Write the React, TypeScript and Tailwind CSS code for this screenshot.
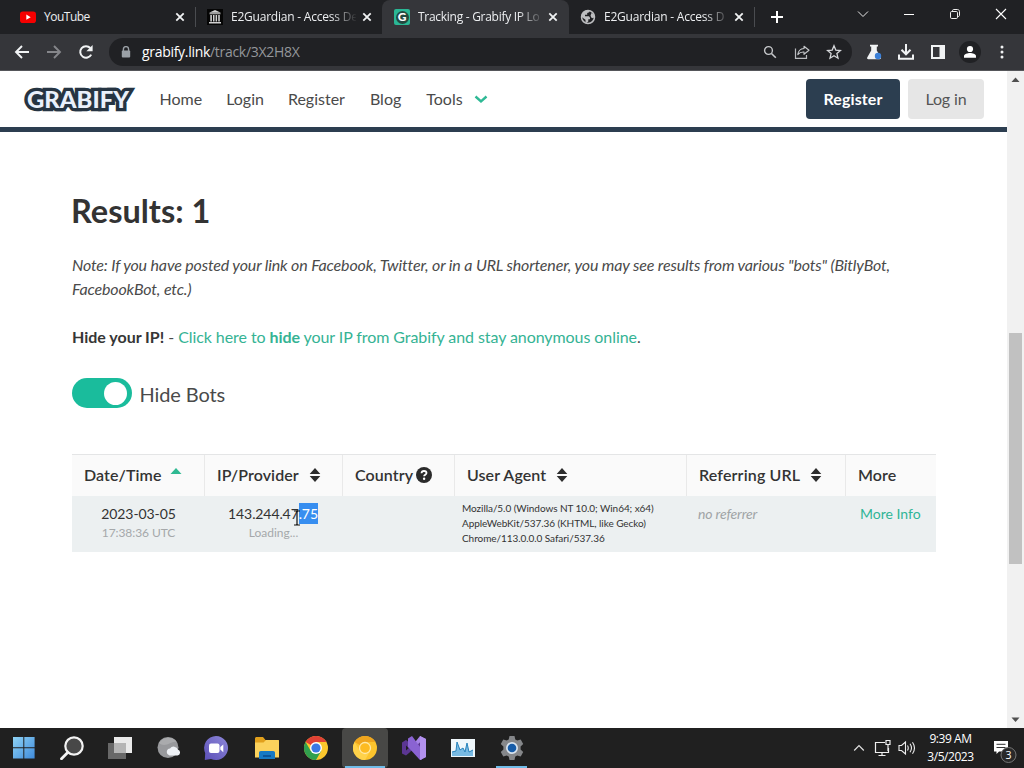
import React from 'react';

type Kids = { children?: React.ReactNode; className?: string };

const ui = "font-['Open_Sans','Noto_Sans',sans-serif]";

function Icon({ size = 16, className = '', children }: Kids & { size?: number }) {
  return (
    <svg width={size} height={size} viewBox={`0 0 ${size} ${size}`} className={`block shrink-0 ${className}`} fill="none">
      {children}
    </svg>
  );
}

function TabClose() {
  return (
    <Icon size={16}>
      <path d="M4.3 4.3l7.4 7.4M11.7 4.3l-7.4 7.4" stroke="#f1f3f4" strokeWidth="1.8" />
    </Icon>
  );
}

function Tab({ icon, title, fade, className, titleClass }: { icon: React.ReactNode; title: string; fade?: boolean; className: string; titleClass: string }) {
  return (
    <div className={`flex h-[34px] shrink-0 items-center ${className}`}>
      {icon}
      <div
        className={`ml-2 h-[18px] w-[125px] text-xs leading-[18px] whitespace-nowrap text-[#eceef0] ${titleClass} ${
          fade ? '[mask-image:linear-gradient(to_right,black_80%,transparent_101%)]' : ''
        }`}
      >
        {title}
      </div>
      <TabClose />
    </div>
  );
}

function TabStrip() {
  return (
    <div className="flex h-[34px] items-center bg-[#202124]">
      <Tab
        className="w-[195px] pl-5"
        title="YouTube"
        titleClass="mr-[3px] tracking-[-0.5px]"
        icon={
          <Icon size={16}>
            <rect x="0" y="2.5" width="16" height="11.5" rx="2.8" fill="#f50000" />
            <path d="M6.3 5.6v5.2l4.4-2.6z" fill="#fff" />
          </Icon>
        }
      />
      <div className="h-5 w-px bg-[#4a4c50]" />
      <Tab
        className="w-[186px] pl-[11px]"
        title="E2Guardian - Access De"
        fade
        titleClass="mr-[3px] tracking-[-0.22px]"
        icon={
          <Icon size={16}>
            <path d="M0 0h16v16H0z" fill="#050505" />
            <path d="M8 1l6 2.7H2zM2.5 4.3h11v1h-11zM3.3 6h1.6v6.5H3.3zM6 6h1.5v6.5H6zM8.6 6h1.5v6.5H8.6zM11.2 6h1.6v6.5h-1.6zM2 13h12v1.6H2z" fill="#d0d0d0" />
          </Icon>
        }
      />
      <Tab
        className="w-[187px] rounded-t-lg bg-[#35363a] pl-3"
        title="Tracking - Grabify IP Lo"
        fade
        titleClass="mr-[2px] tracking-[-0.28px]"
        icon={
          <span className="flex h-4 w-4 items-center justify-center rounded-[2px] bg-[#2ab795]">
            <span className="flex h-[13px] w-[13px] items-center justify-center rounded-full bg-[#24483f] font-['Lato',sans-serif] text-[12px] leading-none font-black text-white">G</span>
          </span>
        }
      />
      <Tab
        className="w-[185px] pl-[11px]"
        title="E2Guardian - Access D"
        fade
        titleClass="mr-[2px] tracking-[-0.22px]"
        icon={
          <Icon size={16}>
            <circle cx="8" cy="8" r="6.500" stroke="#bdbec0" strokeWidth="1.500" />
            <path d="M1.500 6.500C2.300 3.500 5 1.300 8 1.300l1.500.4-.3 1.500-2 .8v1.800H5v1.500h4l1 1.500v1.400H8.300v2.200L6.500 14 5.500 13v-2.200L1.600 8zM11.500 4l2 1 1 3-1.500 1.200-1.800-.7-.7-2z" fill="#bdbec0" />
          </Icon>
        }
      />
      <div className="h-5 w-px bg-[#4a4c50]" />
      <Icon size={14} className="ml-[15px]">
        <path d="M7 1v12M1 7h12" stroke="#fff" strokeWidth="2" />
      </Icon>
      <div className="ml-auto flex h-7 items-center self-start">
        <span className="flex w-[46px] justify-center">
          <Icon size={14}><path d="M2 4.5l5 5 5-5" stroke="#e8e8e8" /></Icon>
        </span>
        <span className="flex w-[46px] justify-center">
          <Icon size={14}><path d="M2 7.5h10" stroke="#fff" /></Icon>
        </span>
        <span className="flex w-[46px] justify-center">
          <Icon size={14}>
            <rect x="2.5" y="4.5" width="7" height="7" rx="1.2" stroke="#eee" />
            <path d="M4.5 4.3V3.7c0-.7.5-1.2 1.2-1.2h3.8c1.1 0 2 .9 2 2v3.8c0 .7-.5 1.2-1.2 1.2h-.5" stroke="#eee" />
          </Icon>
        </span>
        <span className="flex w-[46px] justify-center">
          <Icon size={14}><path d="M2 2l10 10M12 2L2 12" stroke="#fff" strokeWidth="1.1" /></Icon>
        </span>
      </div>
    </div>
  );
}

function Cell({ children }: Kids) {
  return <span className="flex w-8 shrink-0 items-center justify-center">{children}</span>;
}

function Toolbar() {
  return (
    <div className="flex h-[37px] items-center border-b border-[#55565a] bg-[#35363a] pl-[6px]">
      <Cell><Icon size={16}><path d="M15 8H2M8 2L2 8l6 6" stroke="#f1f3f4" strokeWidth="1.9" /></Icon></Cell>
      <Cell><Icon size={16}><path d="M1 8h13M8 2l6 6-6 6" stroke="#85868a" strokeWidth="1.9" /></Icon></Cell>
      <Cell>
        <Icon size={16}>
          <path d="M13.2 10.6A5.8 5.8 0 1 1 12.3 4" stroke="#f1f3f4" strokeWidth="2" />
          <path d="M14.6 1v6.2H8.4z" fill="#f1f3f4" />
        </Icon>
      </Cell>
      <div className="ml-[7px] flex h-7 w-[743px] items-center rounded-full bg-[#202124] pl-[11px]">
        <Icon size={12}>
          <path d="M3.4 5V3.2a2.6 2.6 0 0 1 5.2 0V5" stroke="#9aa0a6" strokeWidth="1.4" />
          <rect x="1.8" y="4.6" width="8.4" height="6.9" rx="1" fill="#9aa0a6" />
        </Icon>
        <span className="ml-[10px] text-sm leading-5 tracking-[-0.3px] text-white">
          grabify.link<span className="text-[#94979b]">/track/3X2H8X</span>
        </span>
        <div className="mr-[2px] ml-auto flex">
          <Cell>
            <Icon size={16}><circle cx="6.5" cy="6.5" r="3.9" stroke="#c6c8cb" strokeWidth="1.4" /><path d="M9.5 9.5l4.3 4.3" stroke="#c6c8cb" strokeWidth="1.6" /></Icon>
          </Cell>
          <Cell>
            <Icon size={16}>
              <path d="M1.5 4.5v9.9h11V11" stroke="#b9bbbe" strokeWidth="1.2" />
              <path d="M10 2.2l5 4.1-5 4V8c-2.700-.2-4.500.5-6.200 2.600C4.200 7 6.300 4.800 10 4.500z" stroke="#c6c8cb" strokeWidth="1.100" strokeLinejoin="round" />
            </Icon>
          </Cell>
          <Cell>
            <Icon size={16}><path d="M8 1.800l1.800 4.300 4.700.4-3.600 3.100 1.100 4.600-4-2.500-4 2.500 1.100-4.600L1.500 6.500l4.700-.4z" stroke="#d5d7da" strokeWidth="1.300" /></Icon>
          </Cell>
        </div>
      </div>
      <span className="ml-[6px] flex">
        <Cell>
          <Icon size={16}>
            <path d="M4 .8h8v1.600h-1.200v4l4 7.100c.4.900-.2 1.700-1.100 1.700H2.300c-.9 0-1.500-.8-1.100-1.700l4-7.100v-4H4z" fill="#f1f3f4" />
            <circle cx="12" cy="12" r="3.200" fill="#3b80d8" />
          </Icon>
        </Cell>
      </span>
      <Cell><Icon size={18}><path d="M9 1v10M4.500 6.800L9 11.300l4.500-4.500M2 11.500v4.300h14v-4.300" stroke="#f1f3f4" strokeWidth="2" /></Icon></Cell>
      <Cell><Icon size={16}><path d="M1 1h14v14H1zM3 3v10h6.500V3z" fill="#f1f3f4" fillRule="evenodd" /></Icon></Cell>
      <Cell>
        <Icon size={22}>
          <circle cx="11" cy="11" r="11" fill="#202124" />
          <circle cx="11" cy="8" r="3.100" fill="#fff" />
          <path d="M5 16.800v-1.600c0-2.400 3.600-3.200 6-3.200s6 .8 6 3.200v1.600z" fill="#fff" />
        </Icon>
      </Cell>
      <Cell><Icon size={16}><circle cx="8" cy="3" r="1.500" fill="#f1f3f4" /><circle cx="8" cy="8" r="1.500" fill="#f1f3f4" /><circle cx="8" cy="13" r="1.500" fill="#f1f3f4" /></Icon></Cell>
    </div>
  );
}

function SiteHeader() {
  return (
    <div className="flex h-[61px] items-center border-b-[5px] border-[#2c3e50] bg-white pl-[23px] text-base text-[#4a4a4a]">
      <svg width="113" height="30" viewBox="0 0 113 30" className="block shrink-0">
        <text x="4" y="23.500" textLength="102" lengthAdjust="spacingAndGlyphs" className="font-['Lato',sans-serif] text-[22px] font-black" fill="#e9f0fb" stroke="#263442" strokeWidth="6.500" strokeLinejoin="miter" paintOrder="stroke">
          GRABIFY
        </text>
      </svg>
      <nav className="ml-[23.500px] flex items-center gap-6">
        <span>Home</span>
        <span>Login</span>
        <span>Register</span>
        <span className="ml-[1px]">Blog</span>
        <span className="ml-[1px] flex items-center">
          Tools
          <Icon size={14} className="ml-[11px]"><path d="M1.500 4.500l5.500 5 5.500-5" stroke="#2fb995" strokeWidth="2.400" /></Icon>
        </span>
      </nav>
      <div className="mr-[23px] ml-auto flex gap-2">
        <span className="flex h-10 w-[94px] items-center justify-center rounded bg-[#2c3e50] font-bold tracking-[0.1px] text-white">Register</span>
        <span className="flex h-10 w-[76px] items-center justify-center rounded bg-[#e6e6e6] tracking-[-0.1px] text-[#555]">Log in</span>
      </div>
    </div>
  );
}

function Sort() {
  return (
    <Icon size={14} className="ml-[9px]">
      <path d="M7 0l5.300 6H1.700zM7 14l5.300-6H1.700z" fill="#2d2d2d" />
    </Icon>
  );
}

function Th({ className = '', children }: Kids) {
  return <div className={`flex h-[41px] shrink-0 items-center border-r border-[#e9e9e9] pb-px pl-3 ${className}`}>{children}</div>;
}

function ResultsTable() {
  return (
    <div className="mt-[46px] w-[864px]">
      <div className="flex border-t border-[#e4e5e6] bg-[#fafafa] text-base font-semibold tracking-[0.080px] text-[#333]">
        <Th className="w-[133px]">
          Date/Time
          <Icon size={12} className="mb-[7px] ml-[9px]"><path d="M6 2l5.500 6H.5z" fill="#2fb992" /></Icon>
        </Th>
        <Th className="w-[138px]">IP/Provider<Sort /></Th>
        <Th className="w-[112px]">
          Country
          <Icon size={16} className="ml-[3px]">
            <circle cx="8" cy="8" r="8" fill="#2b2b2b" />
            <path d="M5.500 6.300C5.600 4.800 6.600 4 8 4s2.500.8 2.500 2c0 1.700-2.400 1.800-2.400 3.300" stroke="#fff" strokeWidth="1.800" />
            <circle cx="8.100" cy="11.700" r="1.200" fill="#fff" />
          </Icon>
        </Th>
        <Th className="w-[232px]">User Agent<Sort /></Th>
        <Th className="w-[159px] tracking-[0.150px]">Referring URL<Sort /></Th>
        <div className="flex h-[41px] items-center pb-px pl-3">More</div>
      </div>
      <div className="flex h-[56px] bg-[#ecf0f1]">
        <div className="w-[133px] pt-[7px] text-center">
          <div className="text-[14px] leading-[22px] tracking-[-0.100px] text-[#333]">2023-03-05</div>
          <div className="text-[12px] leading-[15px] tracking-[-0.080px] text-[#a5a8aa]">17:38:36 UTC</div>
        </div>
        <div className="relative w-[138px] pt-[7px] text-center">
          <div className="pr-[2px] text-[14px] leading-[22px] tracking-[-0.100px] text-[#333]">
            143.244.47<span className="inline-block h-[21px] bg-[#378ef0] align-top leading-[22px] text-white">.75</span>
          </div>
          <div className="pr-px text-[12px] leading-[15px] text-[#a5a8aa]">Loading...</div>
          <Icon size={16} className="absolute top-[14px] left-[84px]"><path d="M5 1h2.500L8 2l.5-1H11M8 2v12M5 15h2.500L8 14l.5 1H11" stroke="#111" strokeWidth="1.200" /></Icon>
        </div>
        <div className="w-[119px]" />
        <div className="w-[236px] pt-[5px] text-[10px] leading-[15px] tracking-[-0.060px] text-[#333]">
          Mozilla/5.0 (Windows NT 10.0; Win64; x64)
          <br />
          AppleWebKit/537.36 (KHTML, like Gecko)
          <br />
          Chrome/113.0.0.0 Safari/537.36
        </div>
        <div className="w-[162px] pt-[7px] text-[14px] leading-[22px] tracking-[-0.150px] text-[#a0a4a6] italic">no referrer</div>
        <div className="pt-[7px] text-[14px] leading-[22px] text-[#30b596]">More Info</div>
      </div>
    </div>
  );
}

function Page() {
  return (
    <div className="w-[1007px] bg-white font-['Lato',sans-serif] text-[#4a4a4a]">
      <SiteHeader />
      <main className="pt-[58px] pl-[72px]">
        <h1 className="-ml-px text-[32.500px] leading-[42px] font-bold text-[#333]">Results: 1</h1>
        <p className="mt-[21px] w-[864px] text-base leading-6 tracking-[-0.152px] whitespace-nowrap italic">
          Note: If you have posted your link on Facebook, Twitter, or in a URL shortener, you may see results from various "bots" (BitlyBot,
          <br />
          FacebookBot, etc.)
        </p>
        <p className="mt-6 text-base leading-6 tracking-[-0.075px]">
          <span className="font-bold tracking-[-0.020px] text-[#363636]">Hide your IP!</span> -{' '}
          <span className="text-[#35b394]">
            Click here to <span className="font-bold">hide</span> your IP from Grabify and stay anonymous online
          </span>
          .
        </p>
        <div className="mt-[29px] flex h-[30px] items-center">
          <div className="flex h-[30px] w-[60px] items-center justify-end rounded-full bg-[#1abc9c] pr-[5px]">
            <div className="h-[23px] w-[23px] rounded-full bg-white" />
          </div>
          <span className="mt-px ml-[7.500px] text-[20px] leading-6 tracking-[-0.100px]">Hide Bots</span>
        </div>
        <ResultsTable />
      </main>
    </div>
  );
}

function Scrollbar() {
  return (
    <div className="flex w-[17px] flex-col items-center bg-[#f1f1f1]">
      <Icon size={17}><path d="M8.500 6.500l4 4.500h-8z" fill="#505050" /></Icon>
      <div className="mt-[245px] h-[231px] w-[13px] bg-[#c1c1c1]" />
      <Icon size={17} className="mt-auto"><path d="M8.500 11l4-4.500h-8z" fill="#505050" /></Icon>
    </div>
  );
}

function Slot({ wide, className = '', children }: Kids & { wide?: boolean }) {
  return <span className={`flex h-10 shrink-0 items-center justify-center ${wide ? 'w-[49.200px]' : 'w-12'} ${className}`}>{children}</span>;
}

function Taskbar() {
  return (
    <div className="flex h-10 items-center bg-[#202020]">
      <Slot>
        <Icon size={24}>
          <defs><linearGradient id="win" x1="0" y1="0" x2="1" y2="1"><stop stopColor="#8ed2f4" /><stop offset="1" stopColor="#3f8bdc" /></linearGradient></defs>
          <path d="M1 1h10.300v10.300H1zM12.300 1h10.300v10.300H12.300zM1 12.300h10.300v10.300H1zM12.300 12.300h10.300v10.300H12.300z" fill="url(#win)" />
        </Icon>
      </Slot>
      <Slot>
        <Icon size={24}><circle cx="14" cy="10" r="8.700" fill="#484848" stroke="#f2f2f2" strokeWidth="2.200" /><path d="M7.700 16.500L1.500 22.700" stroke="#f2f2f2" strokeWidth="2.800" strokeLinecap="round" /></Icon>
      </Slot>
      <Slot>
        <Icon size={24}><path d="M6 1h18v16H6z" fill="#eaeaea" /><path d="M0 7h18v16H0z" fill="#686868" /><path d="M6 7h12v10H6z" fill="#b5b5b5" /></Icon>
      </Slot>
      <Slot>
        <Icon size={24}><circle cx="12" cy="11.500" r="10.500" fill="#98999c" /><path d="M3 7a10.500 10.500 0 0 1 18-.5C17 3 10 13 3 7z" fill="#aaabad" /><path d="M13.500 19.500a3.500 3.500 0 0 1 .5-6.900 4.500 4.500 0 0 1 8 1.100 3 3 0 0 1-.5 5.800z" fill="#eef1f5" /></Icon>
      </Slot>
      <Slot>
        <Icon size={24}>
          <defs><linearGradient id="chat" x1="1" y1="0" x2="0" y2="1"><stop stopColor="#8d87d8" /><stop offset="1" stopColor="#5c50b8" /></linearGradient></defs>
          <path d="M12 0a12 12 0 1 1-5 22.900L.8 24 1.200 17A12 12 0 0 1 12 0z" fill="url(#chat)" />
          <rect x="5" y="7.500" width="10.500" height="9.500" rx="2" fill="#fff" /><path d="M16.300 11l3-2.600v7.800l-3-2.600z" fill="#fff" />
        </Icon>
      </Slot>
      <span className="ml-[2px] flex">
        <Slot wide>
          <Icon size={24}>
            <path d="M0 2.500C0 1.700.7 1 1.500 1H8l2.500 3H23c.6 0 1 .5 1 1v4H0z" fill="#e1a01c" /><path d="M0 6.500h8.500L11 4h12c.6 0 1 .5 1 1v16.500H0z" fill="#fbd25c" />
            <path d="M4 23v-6.200c0-1 .8-1.800 1.800-1.800h12.400c1 0 1.800.8 1.800 1.800V23z" fill="#1679c4" /><path d="M8 19h8v2H8z" fill="#0b559b" />
          </Icon>
        </Slot>
        <Slot wide>
          <Icon size={24}>
            <circle cx="12" cy="12" r="12" fill="#fcc72d" />
            <path d="M12 12L1.600 6A12 12 0 0 1 22.400 6H12z" fill="#e14135" /><path d="M1.600 6A12 12 0 0 0 12 24l5.200-9L12 12l-5.200 3z" fill="#31a04e" />
            <circle cx="12" cy="12" r="6" fill="#fff" /><circle cx="12" cy="12" r="4.600" fill="#3b79e4" />
          </Icon>
        </Slot>
        <Slot wide>
          <span className="flex h-10 w-[46px] flex-col items-center justify-between rounded bg-[#484846] pt-2">
            <Icon size={24}>
              <circle cx="12" cy="12" r="12" fill="#fcc42d" />
              <path d="M12 12L1.600 6A12 12 0 0 1 22.400 6H12z" fill="#efa51e" /><path d="M1.600 6A12 12 0 0 0 12 24l5.200-9L12 12l-5.200 3z" fill="#ffd24a" />
              <circle cx="12" cy="12" r="5.500" fill="#fdbb22" stroke="#ffe9a8" strokeWidth="1.300" />
            </Icon>
            <span className="h-[2px] w-10 bg-[#70bce8]" />
          </span>
        </Slot>
        <Slot wide>
          <Icon size={24}>
            <path d="M0 6.500L4 4l14 11V6.500L7 17l-3 2.500-4-2z" fill="#5b3692" />
            <path d="M4 9.500v5l2.800-2.500z" fill="#202020" />
            <path d="M12 7.500L18 0l6 3v18l-6 3V6.500l-5 4.700z" fill="#a783e6" />
            <path d="M6 2.500L10 0l10 13.500V23.500l-2 .5L6 11z" fill="#8a63d2" />
            <path d="M18 0l6 3v18l-6 3z" fill="#b392ef" />
          </Icon>
        </Slot>
        <Slot wide>
          <Icon size={24}>
            <path d="M0 3h24v18H0z" fill="#eff7fb" /><path d="M1 20v-4l4-1 1-9 3 8 3-2 2 4 2-9 2 9 4-2v6z" fill="#78bae3" /><path d="M1 16l4-1 1-9 3 8 3-2 2 4 2-9 2 9 4-2" stroke="#2683bc" />
          </Icon>
        </Slot>
        <Slot wide className="-ml-px">
          <span className="flex h-10 flex-col items-center justify-between pt-2">
            <Icon size={24}>
              <path d="M9.500 0h5l.8 3.500 2 1.100 3.400-1 2.500 4.300-2.600 2.500v3.200l2.600 2.500-2.500 4.300-3.400-1-2 1.100-.8 3.500h-5l-.8-3.500-2-1.100-3.400 1L.8 16.100l2.600-2.500v-3.200L.8 7.900l2.500-4.300 3.400 1 2-1.100z" fill="#85878a" />
              <circle cx="12" cy="12" r="6" fill="#d9e4ef" /><circle cx="12" cy="12" r="4.300" fill="#165ca8" />
            </Icon>
            <span className="h-[2px] w-[31px] bg-[#70bce8]" />
          </span>
        </Slot>
      </span>
      <div className="ml-auto flex h-10 items-center text-white">
        <Icon size={12}><path d="M1.200 8.500L6 3.700l4.800 4.800" stroke="#e2e2e2" strokeWidth="1.200" /></Icon>
        <Icon size={18} className="ml-[9px]">
          <path d="M11 3.500H1.500v10h13V9M8 13.500v3M4.500 16.500h7" stroke="#eee" strokeWidth="1.200" /><path d="M12 1.500h4v4h-4zM14 5.500V12" stroke="#eee" strokeWidth="1.200" />
        </Icon>
        <Icon size={18} className="ml-[6px]">
          <path d="M1 6.500h2.500L7.500 3v12l-4-3.500H1zM9.500 6.500q1.500 2.500 0 5M12 4.800q3 4.200 0 8.400M14.500 3.200q4 5.800 0 11.600" stroke="#eee" strokeWidth="1.100" />
        </Icon>
        <div className="ml-[7px] w-[55px] text-center text-xs leading-[18px] tracking-[-0.450px] whitespace-nowrap">
          <div>9:39 AM</div>
          <div>3/5/2023</div>
        </div>
        <svg width="24" height="30" viewBox="0 0 24 30" className="mr-[7px] ml-[15px] block" fill="none">
          <path d="M1 8h14v10.500H6L3.500 21v-2.500H1z" fill="#fff" /><path d="M3.500 11.300h9M3.500 14.500h9" stroke="#333" />
          <circle cx="15.500" cy="22" r="7.500" fill="#292929" stroke="#777" />
          <text x="15.500" y="26" textAnchor="middle" className="text-[10.500px]" fill="#fff">3</text>
        </svg>
      </div>
    </div>
  );
}

export default function App() {
  return (
    <div className={`flex h-[768px] w-[1024px] flex-col overflow-hidden bg-white ${ui}`}>
      <TabStrip />
      <Toolbar />
      <div className="flex h-[657px]">
        <Page />
        <Scrollbar />
      </div>
      <Taskbar />
    </div>
  );
}
